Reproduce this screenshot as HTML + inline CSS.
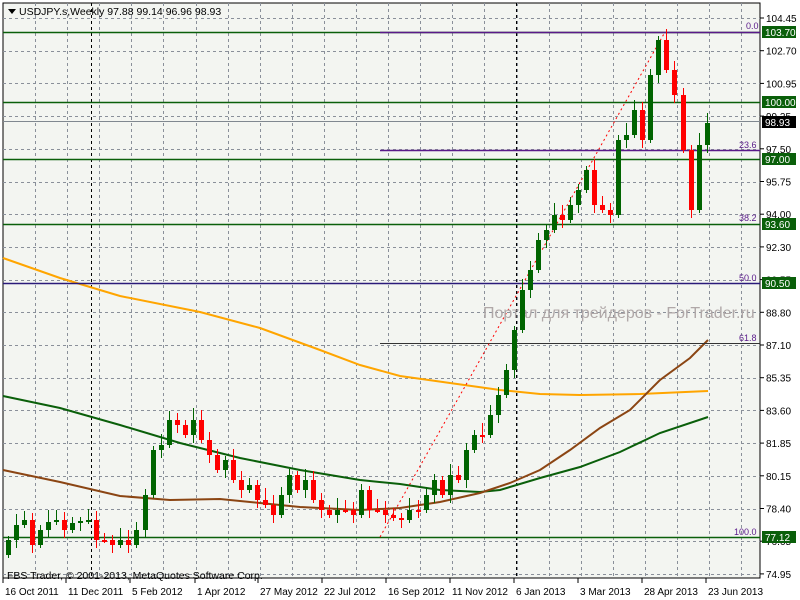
<!DOCTYPE html>
<html><head><meta charset="utf-8"><style>
html,body{margin:0;padding:0;background:#fff;width:800px;height:600px;overflow:hidden}
svg{display:block;font-family:"Liberation Sans",sans-serif}
</style></head><body>
<svg id="s" width="800" height="600" xmlns="http://www.w3.org/2000/svg">
<rect x="0" y="0" width="800" height="600" fill="#ffffff"/>
<rect x="3" y="3" width="757" height="575" fill="#f3f5f1" stroke="#000" stroke-width="1"/>
<g id="grid" stroke="#8a909a" stroke-width="1" stroke-dasharray="3,3"></g>
<line x1="91.5" y1="3" x2="91.5" y2="578" stroke="#000" stroke-dasharray="3,3"/>
<line x1="516.5" y1="3" x2="516.5" y2="578" stroke="#000" stroke-dasharray="3,3"/>
<g id="ma" fill="none" stroke-width="2">
<polyline stroke="#ffa500" points="3,258 60,278 120,296 200,312 260,328 320,350 360,365 400,376 450,383 500,390 540,394 580,395 640,394 708,391"/>
<polyline stroke="#0a5f0a" points="3,396 60,408 120,425 180,443 240,458 300,470 360,480 400,484 440,490 480,492 500,490 540,478 580,467 620,452 660,433 708,417"/>
<polyline stroke="#8b4513" points="3,470 60,482 120,496 170,500 220,499 260,503 300,507 360,510 400,508 440,502 480,493 510,483 540,470 570,450 600,428 630,410 660,380 690,358 708,340"/>
</g>
<g stroke-width="1.5">
<line x1="3" y1="32.5" x2="760" y2="32.5" stroke="#0a5f0a"/>
<line x1="380" y1="32.5" x2="760" y2="32.5" stroke="#5a1a8a"/>
<line x1="3" y1="102.5" x2="760" y2="102.5" stroke="#0a5f0a"/>
<line x1="3" y1="121.5" x2="760" y2="121.5" stroke="#808890" stroke-width="1"/>
<line x1="380" y1="150.5" x2="760" y2="150.5" stroke="#5a1a8a"/>
<line x1="3" y1="159.5" x2="760" y2="159.5" stroke="#0a5f0a"/>
<line x1="3" y1="224.5" x2="760" y2="224.5" stroke="#0a5f0a"/>
<line x1="3" y1="283.5" x2="760" y2="283.5" stroke="#2a1a7a"/>
<line x1="380" y1="343.5" x2="760" y2="343.5" stroke="#333" stroke-width="1"/>
<line x1="3" y1="537.5" x2="760" y2="537.5" stroke="#0a5f0a"/>
</g>
<line x1="380" y1="537" x2="665" y2="32" stroke="#ff0000" stroke-width="1" stroke-dasharray="2,3"/>
<text x="483" y="318" font-size="16" fill="#b0a8a8">Портал для трейдеров - ForTrader.ru</text>
<g id="c"></g>
<g font-size="9" fill="#5a1a8a">
<text x="746" y="29">0.0</text><text x="739" y="148">23.6</text><text x="739" y="221">38.2</text>
<text x="739" y="281">50.0</text><text x="739" y="341">61.8</text><text x="734" y="535">100.0</text>
</g>
<g id="ax" font-size="10" fill="#000"></g>
<path d="M8 9h8l-4 5z" fill="#000"/>
<text x="19" y="15" font-size="10.5" fill="#000">USDJPY.s,Weekly  97.88 99.14 96.96 98.93</text>
<text x="7" y="579" font-size="10.5" fill="#000">FBS Trader, © 2001-2013, MetaQuotes Software Corp.</text>
</svg>
<script>
(function(){
var NS="http://www.w3.org/2000/svg";
function el(p,t,a,txt){var e=document.createElementNS(NS,t);for(var k in a)e.setAttribute(k,a[k]);if(txt)e.textContent=txt;p.appendChild(e);return e;}
var g=document.getElementById('grid');
for(var i=0;i<18;i++){var y=18+i*32.7;el(g,'line',{x1:3,x2:760,y1:Math.round(y)+.5,y2:Math.round(y)+.5});}
for(var k=0;k<23;k++){var x=35+k*32.1;if(x<760)el(g,'line',{x1:Math.round(x)+.5,x2:Math.round(x)+.5,y1:3,y2:578});}
var cl=[540,525,520,545,530,522,520,530,523,521,520,540,540,545,540,545,530,495,450,445,420,425,435,420,440,455,470,460,480,490,485,500,505,515,495,475,490,480,500,510,515,510,510,515,490,510,510,515,518,520,510,510,495,480,495,475,480,450,435,435,415,395,370,330,290,270,240,230,215,220,205,190,170,205,210,215,140,135,110,140,75,40,70,95,150,210,145,123];
var cg=document.getElementById('c'),prev=555;
for(var i=0;i<cl.length;i++){var cx=Math.round(8+i*8.03),o=prev,cc=cl[i];var tp=Math.min(o,cc),bt=Math.max(o,cc);
var hi=tp-(4+(i*7)%9),lo=bt+(3+(i*5)%10);var col=cc<o?'#006400':'#ff0000';
el(cg,'line',{x1:cx+.5,x2:cx+.5,y1:hi,y2:lo,stroke:col,'stroke-width':1});
el(cg,'rect',{x:cx-2,y:tp,width:5,height:Math.max(bt-tp,2),fill:col});prev=cc;}
var ax=document.getElementById('ax');
var lb=["104.45","102.70","100.95","99.25","97.50","95.75","94.00","92.30","90.55","88.80","87.10","85.35","83.60","81.85","80.15","78.40","76.65","74.95"];
for(var i=0;i<lb.length;i++){var y=18+i*32.7;el(ax,'line',{x1:760,x2:764,y1:y,y2:y,stroke:'#000'});el(ax,'text',{x:766,y:y+4},lb[i]);}
[["103.70",32,"#0a5f0a"],["100.00",102,"#0a5f0a"],["98.93",122,"#000"],["97.00",159,"#0a5f0a"],["93.60",224,"#0a5f0a"],["90.50",283,"#0a5f0a"],["77.12",537,"#0a5f0a"]].forEach(function(b){
el(ax,'rect',{x:762,y:b[1]-6,width:34,height:12,fill:b[2]});el(ax,'text',{x:765,y:b[1]+4,fill:'#fff'},b[0]);});
var d=[["16 Oct 2011",3],["11 Dec 2011",66],["5 Feb 2012",130],["1 Apr 2012",195],["27 May 2012",258],["22 Jul 2012",322],["16 Sep 2012",386],["11 Nov 2012",450],["6 Jan 2013",514],["3 Mar 2013",578],["28 Apr 2013",642],["23 Jun 2013",706]];
d.forEach(function(t){el(ax,'line',{x1:t[1],x2:t[1],y1:578,y2:583,stroke:'#000'});el(ax,'text',{x:t[1]+2,y:595},t[0]);});
})();
</script>
</body></html>
